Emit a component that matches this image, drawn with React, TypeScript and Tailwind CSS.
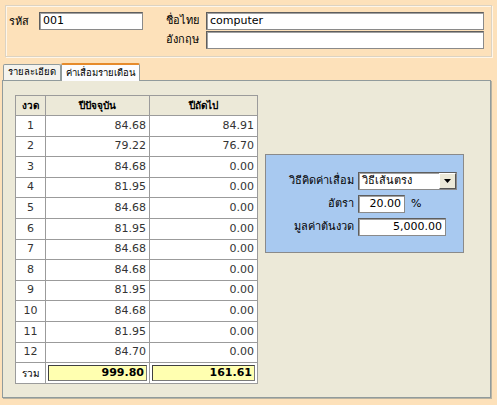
import React from 'react';

const rows: [string, string, string][] = [
  ['1', '84.68', '84.91'],
  ['2', '79.22', '76.70'],
  ['3', '84.68', '0.00'],
  ['4', '81.95', '0.00'],
  ['5', '84.68', '0.00'],
  ['6', '81.95', '0.00'],
  ['7', '84.68', '0.00'],
  ['8', '84.68', '0.00'],
  ['9', '81.95', '0.00'],
  ['10', '84.68', '0.00'],
  ['11', '81.95', '0.00'],
  ['12', '84.70', '0.00'],
];

const inputCls =
  'bg-white border border-t-[#5e5e5e] border-l-[#5e5e5e] border-r-[#8a8a8a] border-b-[#8a8a8a] shadow-[inset_1px_1px_0_#a0a0a0] h-[18px] px-[3px] flex items-center text-[11px] text-black';

const App: React.FC = () => {
  return (
    <div
      className="w-[497px] h-[405px] bg-[#fde1ba] overflow-hidden text-[11px] text-black"
      style={{ fontFamily: '"DejaVu Sans", Tahoma, "Noto Sans", sans-serif' }}
    >
      {/* Header group */}
      <div className="pt-[5px] px-[5px]">
        <div className="h-[52px] border border-[#dcd3c3] shadow-[inset_1px_1px_0_#fff6e8,1px_1px_0_#fff6e8] flex pt-[6px] pl-[2px]">
          <div className="flex items-start">
            <span className="w-[31px] pt-[2px] pl-[1px]">รหัส</span>
            <div className={`${inputCls} w-[104px]`}>001</div>
          </div>
          <div className="flex flex-col ml-[23px]">
            <div className="flex items-center">
              <span className="w-[34px] mr-[6px] whitespace-nowrap">ชื่อไทย</span>
              <div className={`${inputCls} w-[278px]`}>computer</div>
            </div>
            <div className="flex items-center mt-[1px]">
              <span className="w-[34px] mr-[6px] whitespace-nowrap">อังกฤษ</span>
              <div className={`${inputCls} w-[278px]`} />
            </div>
          </div>
        </div>
      </div>

      {/* Tabs */}
      <div className="px-[2px] mt-[5px]">
        <div className="flex items-end h-[18px] pl-[1px]">
          <div className="h-[16px] px-[4px] border border-b-0 border-[#919b9c] bg-[#f4f3ee] flex items-center text-[9.5px] rounded-t-[2px] whitespace-nowrap">
            รายละเอียด
          </div>
          <div className="h-[18px] px-[4px] border-x border-[#919b9c] border-t-2 border-t-[#e68b2c] bg-[#fcfcfe] flex items-center text-[9.5px] -mb-[1px] relative z-10 rounded-t-[2px] whitespace-nowrap">
            ค่าเสื่อมรายเดือน
          </div>
        </div>
        <div className="h-[318px] w-[489px] border border-[#919b9c] bg-[#ece9d8] flex pl-[12px] pt-[14px] shadow-[1px_1px_0_#b8b3a2]">
          {/* Table */}
          <table className="border-collapse border border-[#9b9b9b] h-[289px] self-start">
            <colgroup>
              <col className="w-[30px]" />
              <col className="w-[104px]" />
              <col className="w-[108px]" />
            </colgroup>
            <thead>
              <tr className="h-[20px] bg-[#ece9d8]">
                <th className="border border-[#9b9b9b] font-bold text-[10px]">งวด</th>
                <th className="border border-[#9b9b9b] font-bold text-[10px]">ปีปัจจุบัน</th>
                <th className="border border-[#9b9b9b] font-bold text-[10px]">ปีถัดไป</th>
              </tr>
            </thead>
            <tbody>
              {rows.map(([n, a, b]) => (
                <tr key={n} className="h-[20.6px] bg-white">
                  <td className="border border-[#9b9b9b] text-center text-[#333]">{n}</td>
                  <td className="border border-[#9b9b9b] text-right pr-[3px] text-[#333]">{a}</td>
                  <td className="border border-[#9b9b9b] text-right pr-[3px] text-[#333]">{b}</td>
                </tr>
              ))}
              <tr className="h-[20.6px] bg-white">
                <td className="border border-[#9b9b9b] text-center text-[10px]">รวม</td>
                <td className="border border-[#9b9b9b] px-[2px]">
                  <div className="h-[16px] bg-[#ffffb0] border border-t-[#404040] border-l-[#404040] border-r-[#7a7a7a] border-b-[#7a7a7a] text-right pr-[2px] font-bold leading-[14px]">
                    999.80
                  </div>
                </td>
                <td className="border border-[#9b9b9b] px-[2px]">
                  <div className="h-[16px] bg-[#ffffb0] border border-t-[#404040] border-l-[#404040] border-r-[#7a7a7a] border-b-[#7a7a7a] text-right pr-[2px] font-bold leading-[14px]">
                    161.61
                  </div>
                </td>
              </tr>
            </tbody>
          </table>

          {/* Depreciation settings */}
          <div className="ml-[7px] mt-[59px] w-[199px] h-[99px] self-start bg-[#a8c9f0] border border-[#8a8a8a] pt-[17px] pl-[16px]">
            <div className="flex items-center">
              <span className="w-[72px] text-right mr-[4px] whitespace-nowrap">วิธีคิดค่าเสื่อม</span>
              <div className={`${inputCls} w-[99px] h-[18px] pr-0 justify-between`}>
                <span>วิธีเส้นตรง</span>
                <div className="w-[17px] h-[16px] bg-[#ece9d8] border border-t-white border-l-white border-r-[#555] border-b-[#555] flex items-center justify-center">
                  <svg width="7" height="4" viewBox="0 0 7 4">
                    <path d="M0 0h7L3.5 4z" fill="#000" />
                  </svg>
                </div>
              </div>
            </div>
            <div className="flex items-center mt-[5px]">
              <span className="w-[72px] text-right mr-[4px]">อัตรา</span>
              <div className={`${inputCls} w-[47px] justify-end`}>20.00</div>
              <span className="ml-[6px]">%</span>
            </div>
            <div className="flex items-center mt-[5px]">
              <span className="w-[72px] text-right mr-[4px] whitespace-nowrap">มูลค่าต้นงวด</span>
              <div className={`${inputCls} w-[88px] justify-end`}>5,000.00</div>
            </div>
          </div>
        </div>
      </div>
    </div>
  );
};

export default App;
